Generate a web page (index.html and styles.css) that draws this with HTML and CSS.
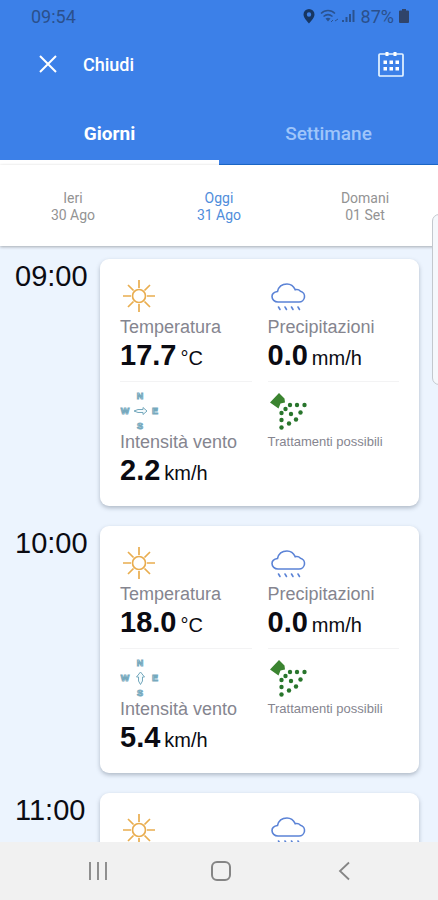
FILE: index.html
```html
<!DOCTYPE html>
<html lang="it">
<head>
    <meta charset="UTF-8">
    <meta name="viewport" content="width=device-width, initial-scale=1.0">
    <title>Previsioni meteo</title>
    <link rel="stylesheet" href="styles.css">
</head>
<body>
    <!-- Shared icons -->
    <svg class="icon-defs" aria-hidden="true">
        <symbol id="icon-sun" viewBox="0 0 40 40">
            <g fill="none" stroke="#e9ad4f" stroke-width="1.7">
                <circle cx="19" cy="20" r="6.5"/>
                <path d="M19 4v8M19 28v8M3 20h8M27 20h8M8 9l5.500 5.500M24.500 25.500l5.500 5.500M30 9l-5.500 5.500M13.500 25.500L8 31"/>
            </g>
        </symbol>
        <symbol id="icon-rain" viewBox="0 0 40 40">
            <g fill="none" stroke="#5b83d6" stroke-width="1.6" stroke-linecap="round">
                <path d="M10 26h21a5.500 5.500 0 0 0 1.500-10.800c-1.500-1.600-3.500-2-5.300-1.500C25.500 10 22.500 8 19 8c-5 0-8.500 3-9.500 7.500C6 16 4 18 4 20.500c0 3 2.500 5.500 6 5.500z"/>
                <path d="M10.500 31l1.500 2.500M17 31l1.500 2.500M23.500 31l1.500 2.500M30 31l1.500 2.500"/>
            </g>
        </symbol>
        <symbol id="icon-spray" viewBox="0 0 40 40">
            <path fill="#3b8430" d="M2 11.500L11 2l5.500 5.500.5 4-4.500 1-2 5z"/>
            <g fill="#28752c">
                <circle cx="22" cy="14" r="2.200"/><circle cx="29" cy="14" r="2.200"/><circle cx="36.500" cy="14" r="2.200"/>
                <circle cx="17.500" cy="18" r="2.200"/><circle cx="13.500" cy="22" r="2.200"/><circle cx="23" cy="23" r="2.200"/>
                <circle cx="32.500" cy="21.500" r="2.200"/><circle cx="13.500" cy="29" r="2.200"/><circle cx="28" cy="28.500" r="2.200"/>
                <circle cx="21" cy="32.500" r="2.200"/><circle cx="13.500" cy="36.500" r="2.200"/>
            </g>
        </symbol>
    </svg>

    <header class="app-header">
        <div class="status-bar">
            <span>09:54</span>
            <div class="status-icons">
                <svg width="12" height="16" viewBox="0 0 12 16"><path fill="#173662" fill-rule="evenodd" d="M6 1a5.500 5.500 0 0 0-5.500 5.500C.5 10 6 15.500 6 15.500s5.500-5.500 5.500-9A5.500 5.500 0 0 0 6 1zm0 3.300a2.200 2.200 0 1 1 0 4.400 2.200 2.200 0 0 1 0-4.400z"/></svg>
                <svg width="36" height="16" viewBox="0 0 36 16">
                    <g fill="none" stroke="#2a528f" stroke-width="1.500">
                        <path d="M1 5.500c4-4 10-4 14 0M3.500 8.500c3-2.500 6-2.500 9 0"/>
                        <path d="M11 14l2-2M15 13l3-2" stroke-width="1"/>
                    </g>
                    <path fill="#2a528f" d="M5.500 10.500q2.500-1.500 5 0L8 13.500zM22 12h2v2h-2zM25.500 9h2v5h-2zM29 6h2v8h-2zM32.500 2h2v12h-2z"/>
                </svg>
                <span>87%</span>
                <svg width="10" height="16" viewBox="0 0 10 16"><path fill="#30446a" d="M3 1h4v1.500h2q1 0 1 1V14q0 1-1 1H1q-1 0-1-1V3.500q0-1 1-1h2z"/></svg>
            </div>
        </div>
        <div class="toolbar">
            <button class="close-button" type="button">
                <svg width="18" height="18" viewBox="0 0 18 18"><path d="M1 1l16 16M17 1L1 17" stroke="#fff" stroke-width="2"/></svg>
                <span>Chiudi</span>
            </button>
            <button class="calendar-button" type="button" aria-label="Calendario">
                <svg width="26" height="26" viewBox="0 0 26 26">
                    <rect x="1" y="3" width="24" height="22" rx="1" fill="none" stroke="#e6f4ff" stroke-width="1.700"/>
                    <path fill="#fff" d="M7.500 1h3v4h-3zM15.500 1h3v4h-3zM5.500 9.500h3.500v3.500H5.500zM11.500 9.500h3.500v3.500h-3.500zM17.500 9.500h3.500v3.500h-3.500zM5.500 16h3.500v3.500H5.500zM11.500 16h3.500v3.500h-3.500zM17.500 16h3.500v3.500h-3.500z"/>
                </svg>
            </button>
        </div>
        <nav class="tabs">
            <button class="tab active" type="button">Giorni</button>
            <button class="tab" type="button">Settimane</button>
        </nav>
    </header>

    <nav class="days">
        <button class="day" type="button">Ieri<br>30 Ago</button>
        <button class="day active" type="button">Oggi<br>31 Ago</button>
        <button class="day" type="button">Domani<br>01 Set</button>
    </nav>

    <main class="hours">
        <section class="hour">
            <h2 class="hour-time">09:00</h2>
            <div class="hour-card">
                <div class="metric">
                    <svg class="metric-icon"><use href="#icon-sun"/></svg>
                    <div class="metric-label">Temperatura</div>
                    <div class="metric-value"><span>17.7</span><span class="unit">°C</span></div>
                </div>
                <div class="metric">
                    <svg class="metric-icon"><use href="#icon-rain"/></svg>
                    <div class="metric-label">Precipitazioni</div>
                    <div class="metric-value"><span>0.0</span><span class="unit">mm/h</span></div>
                </div>
                <div class="metric">
                    <svg class="metric-icon compass" viewBox="0 0 40 40">
                        <text x="20" y="8">N</text>
                        <text x="5" y="23">W</text>
                        <text x="35" y="23">E</text>
                        <text x="20" y="38">S</text>
                        <path d="M27 20l-4-3.500v2h-5L14 20l4 1.500h5v2z"/>
                    </svg>
                    <div class="metric-label">Intensità vento</div>
                    <div class="metric-value"><span>2.2</span><span class="unit">km/h</span></div>
                </div>
                <div class="metric">
                    <svg class="metric-icon"><use href="#icon-spray"/></svg>
                    <div class="metric-label small">Trattamenti possibili</div>
                </div>
            </div>
        </section>

        <section class="hour">
            <h2 class="hour-time">10:00</h2>
            <div class="hour-card">
                <div class="metric">
                    <svg class="metric-icon"><use href="#icon-sun"/></svg>
                    <div class="metric-label">Temperatura</div>
                    <div class="metric-value"><span>18.0</span><span class="unit">°C</span></div>
                </div>
                <div class="metric">
                    <svg class="metric-icon"><use href="#icon-rain"/></svg>
                    <div class="metric-label">Precipitazioni</div>
                    <div class="metric-value"><span>0.0</span><span class="unit">mm/h</span></div>
                </div>
                <div class="metric">
                    <svg class="metric-icon compass" viewBox="0 0 40 40">
                        <text x="20" y="8">N</text>
                        <text x="5" y="23">W</text>
                        <text x="35" y="23">E</text>
                        <text x="20" y="38">S</text>
                        <path d="M20.500 14l-4 5h2v4l2 3.500 2-3.500v-4h2z"/>
                    </svg>
                    <div class="metric-label">Intensità vento</div>
                    <div class="metric-value"><span>5.4</span><span class="unit">km/h</span></div>
                </div>
                <div class="metric">
                    <svg class="metric-icon"><use href="#icon-spray"/></svg>
                    <div class="metric-label small">Trattamenti possibili</div>
                </div>
            </div>
        </section>

        <section class="hour">
            <h2 class="hour-time">11:00</h2>
            <div class="hour-card">
                <div class="metric">
                    <svg class="metric-icon"><use href="#icon-sun"/></svg>
                </div>
                <div class="metric">
                    <svg class="metric-icon"><use href="#icon-rain"/></svg>
                </div>
            </div>
        </section>
    </main>

    <div class="edge-handle"></div>

    <footer class="system-nav">
        <button type="button" aria-label="Recenti">
            <svg width="20" height="20" viewBox="0 0 20 20"><path d="M2 1v18M10 1v18M18 1v18" stroke="#858585" stroke-width="1.800"/></svg>
        </button>
        <button type="button" aria-label="Home">
            <svg width="20" height="20" viewBox="0 0 20 20"><rect x="1" y="1" width="18" height="18" rx="5" fill="none" stroke="#858585" stroke-width="2"/></svg>
        </button>
        <button type="button" aria-label="Indietro">
            <svg width="20" height="20" viewBox="0 0 20 20"><path d="M15 1.500L6 10l9 8.500" fill="none" stroke="#858585" stroke-width="1.800"/></svg>
        </button>
    </footer>
</body>
</html>
```
FILE: styles.css
```css
:root {
    --primary: #3c80e8;
    --primary-dark: #1c6bd0;
    --bg: #ecf4fe;
    --text: #0b0b12;
    --label: #85858f;
}

* {
    box-sizing: border-box;
}

body {
    display: flex;
    flex-direction: column;
    position: relative;
    height: 100vh;
    margin: 0;
    overflow: hidden;
    background-color: var(--bg);
    color: var(--text);
    font-family: Roboto, sans-serif;
}

button {
    padding: 0;
    border: none;
    background: none;
    color: inherit;
    font: inherit;
}

svg {
    display: block;
}

.icon-defs {
    position: absolute;
    width: 0;
    height: 0;
}

.app-header {
    flex: none;
    background-color: var(--primary);
    color: #fff;
}

.status-bar {
    display: flex;
    justify-content: space-between;
    align-items: center;
    height: 32px;
    padding: 0 29px 0 31px;
    color: #2b508c;
    font-size: 18px;
}

.status-icons {
    display: flex;
    align-items: center;
    gap: 5px;
}

.toolbar {
    display: flex;
    justify-content: space-between;
    align-items: center;
    height: 64px;
    padding: 0 34px 0 39px;
}

.close-button {
    display: flex;
    align-items: center;
    gap: 26px;
    font-size: 18px;
    font-weight: 500;
}

.tabs {
    display: flex;
    height: 69px;
}

.tab {
    flex: 1;
    padding-top: 5px;
    box-shadow: inset 0 -1px 0 var(--primary-dark);
    color: #9fc5fa;
    font-size: 19px;
    font-weight: 500;
}

.tab.active {
    box-shadow: inset 0 -5px 0 #fff;
    color: #fff;
    font-weight: 700;
}

.days {
    display: flex;
    flex: none;
    position: relative;
    height: 81px;
    background-color: #fff;
    box-shadow: 0 1px 3px rgba(0, 0, 0, 0.3);
}

.day {
    flex: 1;
    padding-top: 3px;
    color: #939393;
    font-size: 14px;
    line-height: 17px;
}

.day.active {
    color: #508ddb;
}

.hours {
    display: flex;
    flex: 1;
    flex-direction: column;
    gap: 20px;
    min-height: 0;
    padding: 13px 19px 0 0;
    overflow: hidden;
    font-family: "Liberation Sans", Arial, sans-serif;
}

.hour {
    display: flex;
    flex: none;
}

.hour-time {
    flex: none;
    width: 100px;
    margin: 0;
    padding-left: 15px;
    font-size: 29px;
    font-weight: 400;
    line-height: 34px;
}

.hour-card {
    display: grid;
    flex: 1;
    grid-template-columns: 1fr 1fr;
    column-gap: 16px;
    padding: 8px 20px 10px;
    border-radius: 9px;
    background-color: #fff;
    box-shadow: 0 2px 4px rgba(60, 75, 95, 0.35);
}

.metric {
    padding: 9px 0;
}

.metric:nth-child(-n+2) {
    border-bottom: 1px solid #f3f3f4;
}

.metric-icon {
    width: 40px;
    height: 40px;
}

.metric-label {
    color: var(--label);
    font-size: 18px;
    line-height: 22px;
    white-space: nowrap;
}

.metric-label.small {
    font-size: 13px;
}

.metric-value {
    display: flex;
    align-items: baseline;
    gap: 4px;
    font-size: 29px;
    font-weight: 700;
    line-height: 34px;
}

.unit {
    font-size: 20px;
    font-weight: 400;
    line-height: 24px;
}

.compass {
    fill: #f4fbfd;
    stroke: #76a9bd;
    stroke-width: 1px;
}

.compass text {
    font-size: 9px;
    font-weight: 700;
    text-anchor: middle;
}

.edge-handle {
    position: absolute;
    top: 214px;
    right: -8px;
    width: 14px;
    height: 171px;
    border: 1px solid #c3c8ce;
    border-radius: 8px;
    background-color: #f5f8fc;
}

.system-nav {
    display: flex;
    flex: none;
    justify-content: space-between;
    align-items: center;
    height: 58px;
    padding: 0 84px 0 88px;
    background-color: #f1f1f1;
}
```
